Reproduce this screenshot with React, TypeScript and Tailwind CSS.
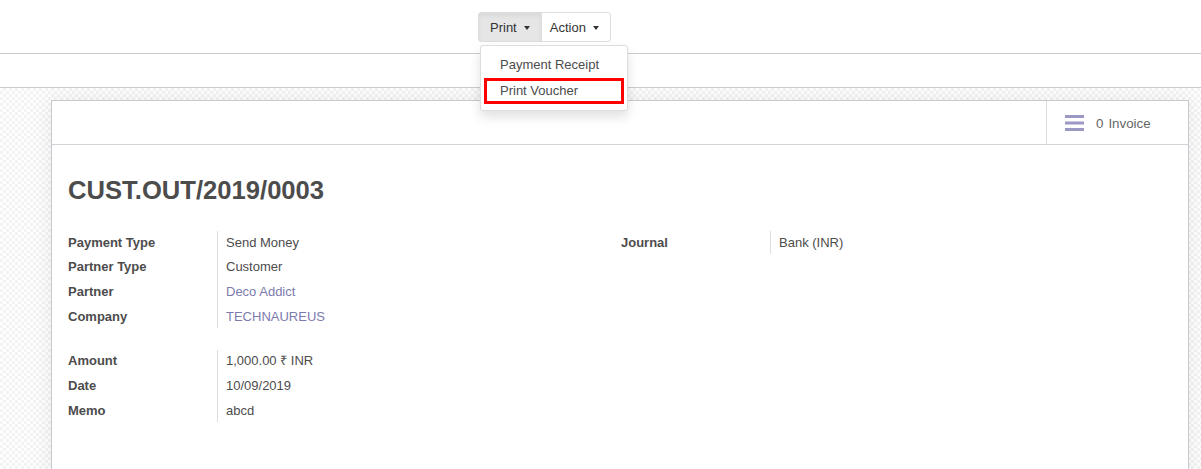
const font = { fontFamily: '"Liberation Sans", Arial, sans-serif' };

function Caret() {
    return <span className="ml-[7px] inline-block w-0 h-0 border-x-[3.5px] border-x-transparent border-t-[4px] border-t-[#333] align-middle" />;
}

function Field({ label, value, link }: { label: string; value: string; link?: boolean }) {
    return (
        <div className="flex h-[24.7px] items-center">
            <div className="w-[149px] font-bold text-[#4c4c4c]">{label}</div>
            <div className={link ? "pl-[9px] text-[#7c7bad]" : "pl-[9px] text-[#4c4c4c]"}>{value}</div>
        </div>
    );
}

function Group({ rows }: { rows: { label: string; value: string; link?: boolean }[] }) {
    return (
        <div className="relative">
            <div className="absolute left-[149px] top-[1px] bottom-[1px] w-px bg-[#ddd]" />
            {rows.map((r) => (
                <Field key={r.label} {...r} />
            ))}
        </div>
    );
}

export default function App() {
    return (
        <div className="relative flex h-[469px] w-[1201px] flex-col overflow-hidden bg-white text-[13px]" style={font}>
            {/* control panel */}
            <div className="h-[54px] shrink-0 border-b border-[#ccc] pl-[478px] pt-[12px]">
                <div className="flex h-[30px] w-fit rounded-[3px] border border-[#ddd] text-[#333]">
                    <button className="flex items-center bg-[#e6e6e6] px-[11px] pt-[2px] shadow-[inset_0_3px_5px_rgba(0,0,0,0.06)]">
                        Print
                        <Caret />
                    </button>
                    <button className="flex items-center border-l border-[#ddd] pl-[8px] pr-[11px] pt-[2px]">
                        Action
                        <Caret />
                    </button>
                </div>
            </div>
            <div className="h-[34px] shrink-0 border-b border-[#ccc]" />

            {/* sheet background */}
            <div className="flex-1 overflow-hidden bg-[repeating-conic-gradient(#f3f3f3_0%_25%,#ffffff_0%_50%)] bg-[length:6px_6px] pl-[51px] pr-[12px] pt-[12px]">
                <div className="h-[420px] border border-[#c8c8d0] bg-white shadow-[0_0_20px_rgba(0,0,0,0.08)]">
                    <div className="flex h-[44px] justify-end border-b border-[#d3d3d9]">
                        <div className="flex w-[142px] items-center border-l border-[#ddd] pl-[18px] pt-[3px] text-[13.3px] text-[#666]">
                            <svg width="20" height="17" viewBox="0 0 20 17" className="mr-[11px] -mt-[3px]">
                                <rect x="0" y="1" width="19" height="3" fill="#9c98c6" />
                                <rect x="0" y="7.5" width="19" height="3" fill="#9c98c6" />
                                <rect x="0" y="14" width="19" height="3" fill="#9c98c6" />
                            </svg>
                            <span>0</span>
                            <span className="ml-[5px]">Invoice</span>
                        </div>
                    </div>

                    <div className="px-[16px] pt-[30px]">
                        <h1 className="text-[25.6px] font-bold leading-[30px] text-[#4c4c4c]">CUST.OUT/2019/0003</h1>

                        <div className="mt-[25px] flex">
                            <div className="w-[553px]">
                                <Group
                                    rows={[
                                        { label: "Payment Type", value: "Send Money" },
                                        { label: "Partner Type", value: "Customer" },
                                        { label: "Partner", value: "Deco Addict", link: true },
                                        { label: "Company", value: "TECHNAUREUS", link: true },
                                    ]}
                                />
                                <div className="mt-[20px]">
                                    <Group
                                        rows={[
                                            { label: "Amount", value: "1,000.00 ₹ INR" },
                                            { label: "Date", value: "10/09/2019" },
                                            { label: "Memo", value: "abcd" },
                                        ]}
                                    />
                                </div>
                            </div>
                            <div className="flex-1">
                                <Group rows={[{ label: "Journal", value: "Bank (INR)" }]} />
                            </div>
                        </div>
                    </div>
                </div>
            </div>

            {/* print dropdown */}
            <div className="absolute left-[480px] top-[45px] w-[148px] rounded-[3px] border border-[#ddd] bg-white py-[6px] text-[#4c4c4c] shadow-[0_6px_12px_rgba(0,0,0,0.12)]">
                <div className="flex h-[26px] items-center pl-[19px]">Payment Receipt</div>
                <div className="mx-[3px] flex h-[26px] items-center border-[3px] border-[#f00] pl-[13px]">Print Voucher</div>
            </div>
        </div>
    );
}
